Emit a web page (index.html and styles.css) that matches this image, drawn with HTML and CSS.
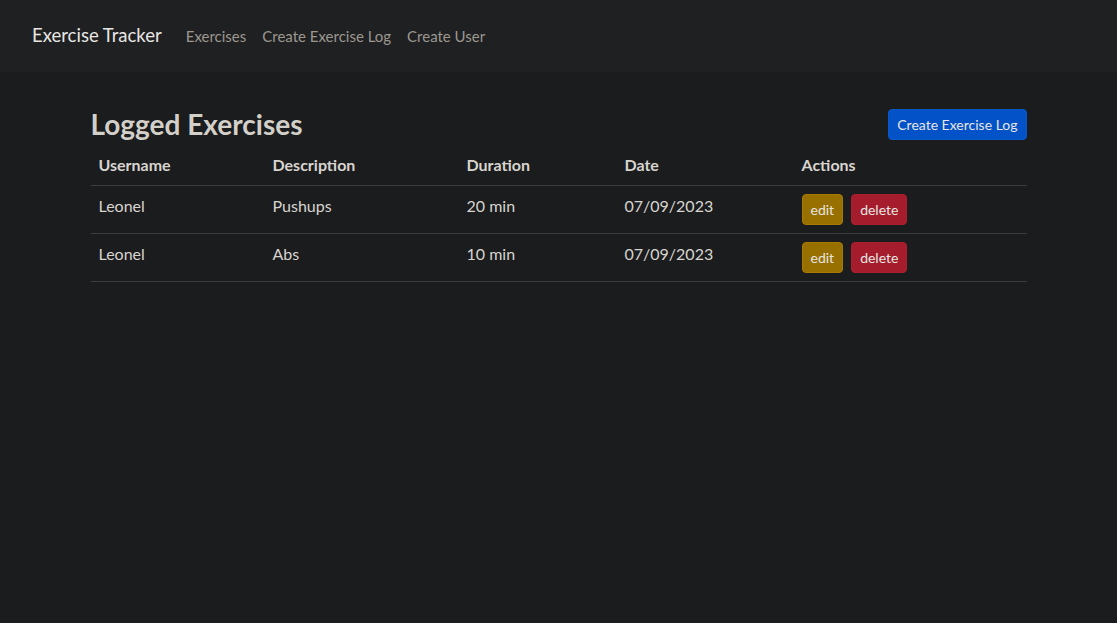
FILE: index.html
```html
<!DOCTYPE html>
<html lang="en">
<head>
<meta charset="utf-8">
<title>Exercise Tracker</title>
<link rel="stylesheet" href="styles.css">
</head>
<body>
<nav class="navbar">
  <a class="brand" href="#">Exercise Tracker</a>
  <ul class="nav-links">
    <li><a href="#">Exercises</a></li>
    <li><a href="#">Create Exercise Log</a></li>
    <li><a href="#">Create User</a></li>
  </ul>
</nav>
<main class="container">
  <div class="header-row">
    <h2 class="title">Logged Exercises</h2>
    <button class="btn btn-primary">Create Exercise Log</button>
  </div>
  <table class="table">
    <thead>
      <tr>
        <th class="c-user">Username</th>
        <th class="c-desc">Description</th>
        <th class="c-dur">Duration</th>
        <th class="c-date">Date</th>
        <th class="c-act">Actions</th>
      </tr>
    </thead>
    <tbody>
      <tr>
        <td>Leonel</td>
        <td>Pushups</td>
        <td>20 min</td>
        <td>07/09/2023</td>
        <td class="actions"><button class="btn btn-warning">edit</button><button class="btn btn-danger">delete</button></td>
      </tr>
      <tr>
        <td>Leonel</td>
        <td>Abs</td>
        <td>10 min</td>
        <td>07/09/2023</td>
        <td class="actions"><button class="btn btn-warning">edit</button><button class="btn btn-danger">delete</button></td>
      </tr>
    </tbody>
  </table>
</main>
</body>
</html>
```
FILE: styles.css
```css
* { box-sizing: border-box; }
html, body {
  margin: 0;
  background: #1b1c1e;
  color: #d8d4cf;
  font-family: "Lato", "Open Sans", sans-serif;
  font-size: 16px;
  line-height: 1.5;
}
.navbar {
  height: 72px;
  background: #1f2022;
  display: flex;
  align-items: center;
  padding: 0 32px;
}
.brand {
  color: #e8e6e3;
  text-decoration: none;
  font-size: 18.5px;
  margin-right: 16px;
}
.nav-links {
  list-style: none;
  display: flex;
  margin: 0;
  padding: 0;
}
.nav-links a {
  display: block;
  padding: 8px 8px;
  color: #9c978f;
  text-decoration: none;
  font-size: 15px;
}
.container {
  width: 960px;
  margin: 0 auto;
  padding: 36px 12px 0;
}
.header-row {
  display: flex;
  justify-content: space-between;
  align-items: center;
}
.title {
  margin: 0;
  font-size: 28px;
  font-weight: 700;
  line-height: 1.2;
  color: #d3cfc9;
}
.btn {
  font-family: inherit;
  font-size: 14px;
  line-height: 1.5;
  padding: 4px 8px;
  border-radius: 4px;
  border: 1px solid transparent;
  color: #e8e6e3;
  cursor: pointer;
}
.btn-primary { background: #0452c8; border-color: #0a58ca; }
.btn-warning { background: #987000; border-color: #a87b00; }
.btn-danger { background: #a51c2c; border-color: #ab1f2f; }
.table {
  width: 100%;
  border-collapse: collapse;
  margin-top: 3px;
}
.table th, .table td {
  text-align: left;
  vertical-align: top;
  padding: 8px;
  border-bottom: 1px solid #3a3d40;
}
.table th { font-weight: 700; color: #d8d4cf; }
.table td { font-weight: 400; }
.c-user { width: 174px; }
.c-desc { width: 194px; }
.c-dur { width: 158px; }
.c-date { width: 177px; }
.actions { display: flex; gap: 8px; }
```
